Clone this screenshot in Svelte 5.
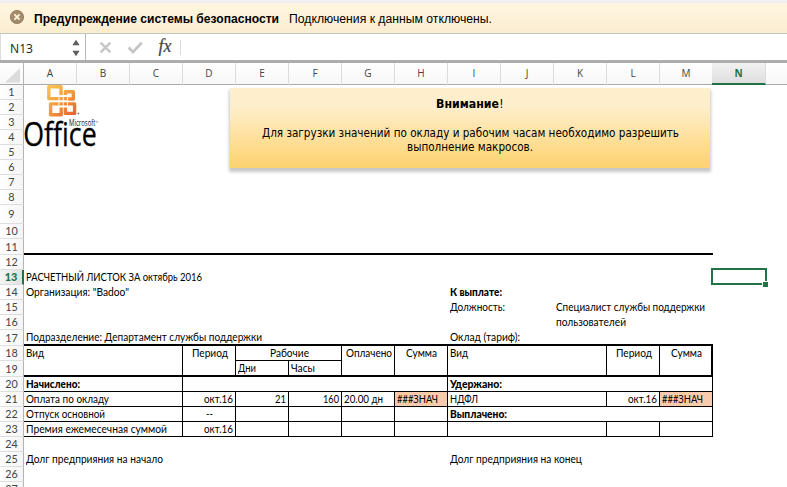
<script>
  const columns = 'ABCDEFGHIJKLMN'.split('');
  const heights = [15, 15, 15, 15, 15, 15, 15, 15, 19, 15, 16, 15, 15, 15, 15, 15, 16, 15, 16, 15, 15, 15, 15, 15, 15, 15, 15];
  const template = heights.map((h) => h + 'px').join(' ');

  // r: row, c: first column (A = 1), s: column span, h: row span, w: text width
  const cells = [
    { r: 11, c: 1, s: 13, k: 'bb' },
    { r: 13, c: 1, s: 6, t: 'РАСЧЕТНЫЙ ЛИСТОК ЗА октябрь 2016', w: 176 },
    { r: 14, c: 1, s: 6, t: 'Организация: "Badoo"', w: 103 },
    { r: 14, c: 9, s: 3, t: 'К выплате:', w: 52, k: 'bold' },
    { r: 15, c: 9, s: 2, t: 'Должность:', w: 55 },
    { r: 15, c: 11, s: 3, t: 'Специалист службы поддержки', w: 149 },
    { r: 16, c: 11, s: 3, t: 'пользователей', w: 70 },
    { r: 17, c: 1, s: 8, t: 'Подразделение: Департамент службы поддержки', w: 236, k: 'bb' },
    { r: 17, c: 9, s: 5, t: 'Оклад (тариф):', w: 70, k: 'bb' },
    { r: 18, h: 2, c: 1, s: 3, t: 'Вид', w: 18, k: 'br bb' },
    { r: 18, h: 2, c: 4, t: 'Период', w: 36, k: 'br bb center' },
    { r: 18, c: 5, s: 2, t: 'Рабочие', w: 39, k: 'br b center' },
    { r: 19, c: 5, t: 'Дни', w: 18, k: 'br bb' },
    { r: 19, c: 6, t: 'Часы', w: 24, k: 'br bb' },
    { r: 18, h: 2, c: 7, t: 'Оплачено', w: 46, k: 'br bb center' },
    { r: 18, h: 2, c: 8, t: 'Сумма', w: 31, k: 'br bb center' },
    { r: 18, h: 2, c: 9, s: 3, t: 'Вид', w: 18, k: 'br bb' },
    { r: 18, h: 2, c: 12, t: 'Период', w: 36, k: 'br bb center' },
    { r: 18, h: 2, c: 13, t: 'Сумма', w: 31, k: 'rr bb center' },
    { r: 20, c: 1, s: 3, t: 'Начислено:', w: 54, k: 'bold br b' },
    { r: 20, c: 4, s: 5, k: 'br b' },
    { r: 20, c: 9, s: 5, t: 'Удержано:', w: 52, k: 'bold br b' },
    { r: 21, c: 1, s: 3, t: 'Оплата по окладу', w: 83, k: 'br b' },
    { r: 21, c: 4, t: 'окт.16', w: 29, k: 'br b right' },
    { r: 21, c: 5, t: '21', w: 11, k: 'br b right' },
    { r: 21, c: 6, t: '160', w: 16, k: 'br b right' },
    { r: 21, c: 7, t: '20.00 дн', w: 39, k: 'br b' },
    { r: 21, c: 8, t: '###ЗНАЧ', w: 41, k: 'br b error' },
    { r: 21, c: 9, s: 3, t: 'НДФЛ', w: 28, k: 'br b' },
    { r: 21, c: 12, t: 'окт.16', w: 29, k: 'br b right' },
    { r: 21, c: 13, t: '###ЗНАЧ', w: 41, k: 'br b error' },
    { r: 22, c: 1, s: 3, t: 'Отпуск основной', w: 79, k: 'br b' },
    { r: 22, c: 4, t: '--', w: 7, k: 'br b center' },
    { r: 22, c: 5, k: 'br b' },
    { r: 22, c: 6, k: 'br b' },
    { r: 22, c: 7, k: 'br b' },
    { r: 22, c: 8, k: 'br b' },
    { r: 22, c: 9, s: 5, t: 'Выплачено:', w: 57, k: 'bold br b' },
    { r: 23, c: 1, s: 3, t: 'Премия ежемесечная суммой', w: 141, k: 'br b' },
    { r: 23, c: 4, t: 'окт.16', w: 29, k: 'br b right' },
    { r: 23, c: 5, k: 'br b' },
    { r: 23, c: 6, k: 'br b' },
    { r: 23, c: 7, k: 'br b' },
    { r: 23, c: 8, k: 'br b' },
    { r: 23, c: 9, s: 3, k: 'br b' },
    { r: 23, c: 12, k: 'br b' },
    { r: 23, c: 13, k: 'br b' },
    { r: 25, c: 1, s: 6, t: 'Долг предприяния на начало', w: 137 },
    { r: 25, c: 9, s: 5, t: 'Долг предприяния на конец', w: 132 }
  ];

  // Condenses the text horizontally so that it takes the given width.
  function fit(node, width) {
    const natural = node.getBoundingClientRect().width;
    node.style.display = 'inline-block';
    node.style.textAlign = 'left';
    node.style.width = width + 'px';
    node.style.transformOrigin = '0 50%';
    node.style.transform = `scaleX(${width / natural})`;
  }
</script>

<div class="app">
  <div class="warning">
    <svg class="close" viewBox="0 0 14 14" width="14" height="14">
      <circle cx="7" cy="7" r="6.6" fill="#a58b6b" stroke="#8d7558" stroke-width=".8" />
      <path d="M4.4 4.4l5.2 5.2M9.6 4.4L4.4 9.6" stroke="#fff6e2" stroke-width="1.8" />
    </svg>
    <b><span use:fit={245}>Предупреждение системы безопасности</span></b>
    <span class="detail"><span use:fit={203}>Подключения к данным отключены.</span></span>
  </div>

  <div class="formula">
    <div class="name">
      <span use:fit={23}>N13</span>
      <svg viewBox="0 0 8 18" width="8" height="18">
        <path d="M4 0.8L7.6 6.2H.4zM4 17.2L7.6 11.8H.4z" fill="#5e5e5e" />
      </svg>
    </div>
    <svg class="tools" viewBox="0 0 100 26" width="100" height="26">
      <path d="M14.6 8.6l9.8 9.8M24.4 8.6l-9.8 9.8" stroke="#c6c6c6" stroke-width="2.4" fill="none" />
      <path d="M42.6 13.5l4.4 4.4 8.8-9.2" stroke="#c6c6c6" stroke-width="2.8" fill="none" />
      <text x="72.5" y="18" class="fx">fx</text>
      <path d="M94.5 6v15" stroke="#dcdcdc" />
    </svg>
  </div>

  <div class="columns">
    <div class="corner"><svg viewBox="0 0 16 15" width="16" height="15"><path d="M15 0v14.5H0z" fill="#dcdcdc" /></svg></div>
    {#each columns as name}
      <div class="column" class:active={name === 'N'}>{name}</div>
    {/each}
    <div class="column last"></div>
  </div>

  <div class="sheet" style="grid-template-rows: {template}">
    {#each heights as _, i}
      <div class="row" class:active={i === 12} style="grid-row: {i + 1}">{i + 1}</div>
    {/each}
    {#each cells as cell}
      <div
        class="cell {cell.k ?? ''}"
        style="grid-row: {cell.r} / span {cell.h ?? 1}; grid-column: {cell.c + 1} / span {cell.s ?? 1}"
      >
        {#if cell.t}<span use:fit={cell.w}>{cell.t}</span>{/if}
      </div>
    {/each}
    <div class="selection"><i></i></div>

    <svg class="logo" viewBox="0 0 76 66" width="76" height="66">
      <defs>
        <linearGradient id="flame" gradientUnits="userSpaceOnUse" x1="24" y1="0" x2="52" y2="32">
          <stop offset="0" stop-color="#f9c74f" />
          <stop offset=".5" stop-color="#f19a3e" />
          <stop offset="1" stop-color="#e75930" />
        </linearGradient>
      </defs>
      <g fill="none" stroke="url(#flame)" stroke-width="3.4" stroke-linejoin="round">
        <path d="M34.5 13.6H24.8V1.8H37V10" />
        <path d="M41.4 10V6.8H49.3V14H44" />
        <path d="M34.5 18.9H26.6V29.8H37.2V22.5" />
        <path d="M41.4 22.5V28.4H50.6V18.9H44" />
      </g>
      <g fill="url(#flame)">
        <path d="M35.4 11.9h3.4v3.4h-3.4zM39.7 11.9h3.4v3.4h-3.4zM35.4 17.2h3.4v3.4h-3.4zM39.7 17.2h3.4v3.4h-3.4z" />
      </g>
      <circle cx="54.4" cy="28.5" r=".9" fill="#777" />
      <text class="office" x="-.8" y="61" textLength="73.5" lengthAdjust="spacingAndGlyphs">Office</text>
      <text class="microsoft" x="45" y="41.3" textLength="26.5" lengthAdjust="spacingAndGlyphs">Microsoft</text>
      <circle cx="73" cy="36.8" r=".8" fill="none" stroke="#666" stroke-width=".4" />
    </svg>

    <div class="notice">
      <p><b><span use:fit={63}>Внимание</span></b>!</p>
      <p class="gap"><span use:fit={417}>Для загрузки значений по окладу и рабочим часам необходимо разрешить</span></p>
      <p><span use:fit={126}>выполнение макросов.</span></p>
    </div>
  </div>
</div>

<style>
  :global(body) {
    margin: 0;
    overflow: hidden;
  }
  .app {
    width: 787px;
    height: 487px;
    overflow: hidden;
    background: #fff;
    color: #000;
    font-family: 'Open Sans', 'Noto Sans', sans-serif;
    box-sizing: border-box;
  }
  .app * {
    box-sizing: border-box;
  }
  span {
    white-space: nowrap;
  }
  .warning {
    height: 34px;
    border-top: 3px solid #c9c9c9;
    border-image: linear-gradient(#f0f0f0 66%, #c4c4c4 66%) 3;
    border-bottom: 1px solid #c8c0b2;
    background: linear-gradient(#fff6e0, #fbedd0);
    display: flex;
    align-items: center;
    padding: 1px 0 0 10px;
    font: 12px 'Liberation Sans', sans-serif;
  }
  .close {
    margin: -3px 10px 0 0;
  }
  .detail {
    margin-left: 10px;
  }
  .formula {
    height: 29px;
    display: flex;
    border-bottom: 3px solid #aaa;
    border-image: linear-gradient(#adadad 33.4%, #ececec 33.4% 66.6%, #adadad 66.6%) 3;
  }
  .name {
    width: 86px;
    height: 26px;
    border-right: 1px solid #b9b9b9;
    border-left: 1px solid #ddd;
    display: flex;
    align-items: center;
    justify-content: space-between;
    padding: 2px 5px 0 9px;
    font-size: 12.5px;
    color: #222;
  }
  .name svg {
    margin-top: -1px;
  }
  .tools {
    flex: none;
  }
  .fx {
    font: italic 18px 'Liberation Serif', serif;
    fill: #444;
    stroke: #444;
    stroke-width: 0.2;
  }
  .columns {
    display: grid;
    grid-template-columns: 24px repeat(14, 53px) 21px;
    height: 22px;
    border-bottom: 1px solid #ababab;
    background: linear-gradient(#fff, #f7f7f7);
  }
  .corner {
    display: flex;
    align-items: flex-end;
    justify-content: flex-end;
    padding: 0 2px 2px 0;
    border-right: 1px solid #b4b4b4;
  }
  .column {
    border-right: 1px solid #dcdcdc;
    font-size: 10px;
    line-height: 21px;
    text-align: center;
    color: #444;
  }
  .column.last {
    border-right: 0;
  }
  .column.active {
    background: linear-gradient(#f2f2f2, #dedede);
    color: #217346;
    font-weight: 700;
    height: 22px;
    border-bottom: 2px solid #217346;
    margin-left: -1px;
  }
  .sheet {
    position: relative;
    display: grid;
    grid-template-columns: 24px repeat(14, 53px) 21px;
    font-family: Lato, 'Open Sans', sans-serif;
  }
  .row {
    grid-column: 1;
    border-right: 1px solid #b4b4b4;
    border-bottom: 1px solid #dedede;
    background: linear-gradient(90deg, #fff, #f5f5f5);
    font-size: 10.8px;
    display: flex;
    align-items: center;
    justify-content: center;
    color: #444;
    line-height: 14px;
  }
  .row.active {
    background: linear-gradient(90deg, #f4f4f4, #e0e0e0);
    border-right: 2px solid #217346;
    color: #217346;
    font-weight: 900;
  }
  .cell {
    font-size: 11px;
    line-height: 13px;
    padding: 0 2px;
    white-space: nowrap;
    z-index: 1;
  }
  .cell span {
    vertical-align: top;
  }
  .bold {
    font-weight: 900;
  }
  .center {
    text-align: center;
    padding-left: 3px;
  }
  .right {
    text-align: right;
  }
  .b {
    border-bottom: 1px solid #000;
  }
  .bb {
    border-bottom: 2px solid #000;
  }
  .br {
    border-right: 1px solid #000;
  }
  .rr {
    border-right: 2px solid #000;
  }
  .error {
    background: #f8cbad;
  }
  .selection {
    grid-row: 13;
    grid-column: 15;
    margin: -2px -1px 0 -2px;
    border: 2px solid #217346;
    position: relative;
    z-index: 2;
  }
  .selection i {
    position: absolute;
    right: -3px;
    bottom: -4px;
    width: 6px;
    height: 6px;
    background: #217346;
    border: solid #fff;
    border-width: 1px 0 0 1px;
  }
  .logo {
    position: absolute;
    left: 24px;
    top: 0;
    overflow: visible;
  }
  .office {
    font: 32px 'Open Sans', sans-serif;
    stroke: #000;
    stroke-width: 0.3;
  }
  .microsoft {
    font: 8.5px 'Open Sans', sans-serif;
    fill: #222;
  }
  .notice {
    position: absolute;
    left: 230px;
    top: 3px;
    width: 480px;
    height: 80px;
    padding-top: 9px;
    background: linear-gradient(#ffeecb 25%, #fdd473 95%);
    box-shadow: 0 3px 3px 1px rgba(0, 0, 0, 0.22);
    font: 12px/14px 'DejaVu Sans Condensed', 'DejaVu Sans', sans-serif;
    text-align: center;
    z-index: 3;
  }
  .notice p {
    margin: 0;
    height: 14px;
  }
  .notice .gap {
    margin-top: 15px;
  }
</style>
